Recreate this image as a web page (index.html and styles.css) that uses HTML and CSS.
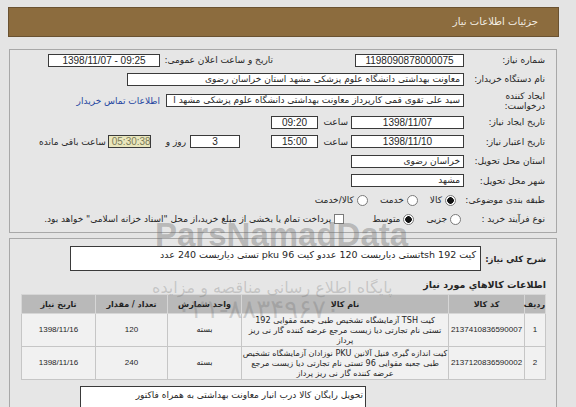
FILE: index.html
```html
<!DOCTYPE html>
<html lang="fa">
<head>
<meta charset="utf-8">
<title>جزئیات اطلاعات نیاز</title>
<link rel="stylesheet" href="styles.css">
</head>
<body>
<div class="wrap">
  <div class="hdr">جزئیات اطلاعات نیاز</div>

  <div class="panel p1">
    <div class="row r1">
      <span class="lbl">شماره نیاز:</span>
      <span class="box num need-no">1198090878000075</span>
      <span class="lbl2">تاریخ و ساعت اعلان عمومی:</span>
      <span class="box num pubdate">1398/11/07 - 09:25</span>
    </div>
    <div class="row r2">
      <span class="lbl">نام دستگاه خریدار:</span>
      <span class="box txt buyer">معاونت بهداشتی دانشگاه علوم پزشکی مشهد استان خراسان رضوی</span>
    </div>
    <div class="row r3">
      <span class="lbl two">ایجاد کننده<br>درخواست:</span>
      <span class="box txt creator">سید علی تقوی قمی کارپرداز معاونت بهداشتی دانشگاه علوم پزشکی مشهد ا</span>
      <a class="contact" href="#">اطلاعات تماس خریدار</a>
    </div>
    <div class="row r4">
      <span class="lbl">تاریخ ایجاد نیاز:</span>
      <span class="box num date">1398/11/07</span>
      <span class="at">ساعت</span>
      <span class="box num time">09:20</span>
    </div>
    <div class="row r5">
      <span class="lbl">تاریخ اعتبار نیاز:</span>
      <span class="box num date">1398/11/10</span>
      <span class="at">ساعت</span>
      <span class="box num time">15:00</span>
      <span class="box num days">3</span>
      <span class="dayand">روز و</span>
      <span class="box num remain">05:30:38</span>
      <span class="remain-lbl">ساعت باقی مانده</span>
    </div>
    <div class="row r6">
      <span class="lbl">استان محل تحویل:</span>
      <span class="box txt place">خراسان رضوی</span>
    </div>
    <div class="row r7">
      <span class="lbl">شهر محل تحویل:</span>
      <span class="box txt place">مشهد</span>
    </div>
    <div class="row r8">
      <span class="lbl">طبقه بندی موضوعی:</span>
      <span class="opt first"><span class="radio on"></span>کالا</span>
      <span class="opt"><span class="radio"></span>خدمت</span>
      <span class="opt"><span class="radio"></span>کالا/خدمت</span>
    </div>
    <div class="row r9">
      <span class="lbl short">نوع فرآیند خرید :</span>
      <span class="opt"><span class="radio"></span>جزیی</span>
      <span class="opt"><span class="radio on"></span>متوسط</span>
      <span class="opt chk-opt"><span class="check"></span>پرداخت تمام یا بخشی از مبلغ خرید،از محل "اسناد خزانه اسلامی" خواهد بود.</span>
    </div>
  </div>

  <div class="panel p2">
    <div class="desc-row">
      <span class="desc-lbl">شرح کلي نیاز:</span>
      <div class="desc-box">کیت 192 tshتستی دیاریست 120 عددو کیت pku 96 تستی دیاریست 240 عدد</div>
    </div>
    <div class="title">اطلاعات کالاهاي مورد نیاز</div>
    <table class="items">
      <colgroup>
        <col class="c-no"><col class="c-code"><col class="c-name"><col class="c-unit"><col class="c-qty"><col class="c-date">
      </colgroup>
      <thead>
        <tr><th>ردیف</th><th>کد کالا</th><th>نام کالا</th><th>واحد شمارش</th><th>تعداد / مقدار</th><th>تاریخ نیاز</th></tr>
      </thead>
      <tbody>
        <tr>
          <td class="n">1</td>
          <td class="n">2137410836590007</td>
          <td class="name">کیت TSH آزمایشگاه تشخیص طبی جعبه مقوایی 192<br>تستی نام تجارتی دیا زیست مرجع عرضه کننده گار نی ریز<br>پرداز</td>
          <td>بسته</td>
          <td class="n">120</td>
          <td class="n">1398/11/16</td>
        </tr>
        <tr>
          <td class="n">2</td>
          <td class="n">2137120836590002</td>
          <td class="name">کیت اندازه گیری فنیل آلانین PKU نوزادان آزمایشگاه تشخیص<br>طبی جعبه مقوایی 96 تستی نام تجارتی دیا زیست مرجع<br>عرضه کننده گار نی ریز پرداز</td>
          <td>بسته</td>
          <td class="n">240</td>
          <td class="n">1398/11/16</td>
        </tr>
      </tbody>
    </table>
    <div class="note">تحویل رایگان کالا درب انبار معاونت بهداشتی به همراه فاکتور</div>
  </div>
</div>

<div class="wm" aria-hidden="true">
  <span class="wm-brand">ParsNamadData</span>
  <span class="wm-site">پایگاه اطلاع رسانی مناقصه و مزایده</span>
  <span class="wm-phone">۰۲۱-۸۸۳۴۹۶۷۰</span>
</div>
</body>
</html>
```

FILE: styles.css
```css
html, body {
  margin: 0;
  padding: 0;
}
body {
  position: relative;
  background: #e4e4e4;
  font-family: "DejaVu Sans", sans-serif;
  font-size: 9px;
  color: #262626;
  overflow: hidden;
}
.wrap {
  width: 551px;
  margin: 7px 0 0 8px;
  direction: rtl;
}
.hdr {
  height: 28px;
  line-height: 28px;
  background: #8c6c3e;
  border: 1px solid #6a5231;
  color: #f3eee4;
  padding-right: 20px;
  font-size: 10px;
}
.panel {
  border: 1px solid #a8a8a8;
  background: #e6e6e6;
  margin: 0 2px 0 1px;
}
.p1 {
  margin-top: 12px;
  padding: 1px 11px 4px 0;
}
.row {
  display: flex;
  align-items: center;
  height: 19px;
  white-space: nowrap;
}
.r1 { height: 18px; }
.r2 { height: 20px; }
.r3 { height: 23px; }
.r4 { height: 20px; }
.r5 { height: 19px; }
.r6 { height: 20px; }
.r7 { height: 19px; }
.r8 { height: 20px; }
.r9 { height: 18px; }

.lbl {
  width: 81px;
  flex: none;
}
.lbl.two {
  line-height: 10px;
  white-space: normal;
}
.lbl.short {
  width: 72px;
}
.box {
  flex: none;
  box-sizing: border-box;
  height: 13px;
  line-height: 11px;
  border: 1px solid #3a3a3a;
  background: #fff;
  padding: 0 3px;
  overflow: hidden;
  white-space: nowrap;
}
.num {
  direction: ltr;
  text-align: center;
  font-family: "Liberation Sans", "DejaVu Sans", sans-serif;
  font-size: 10px;
}
.txt {
  text-align: right;
}
.need-no { width: 109px; }
.lbl2 {
  width: 107px;
  margin-right: 82px;
  flex: none;
}
.pubdate { width: 112px; margin-right: 6px; }
.buyer { width: 337px; }
.creator { width: 298px; }
.contact {
  margin-right: 6px;
  color: #2445a0;
  text-decoration: none;
}
.date { width: 113px; }
.at {
  width: 30px;
  padding-right: 3px;
  flex: none;
}
.time { width: 47px; }
.days { width: 50px; margin-right: 31px; }
.dayand { margin-right: 4px; }
.remain {
  width: 43px;
  margin-right: 15px;
  background: #e9e6bc;
  color: #7b7a58;
}
.remain-lbl { margin-right: 2px; }
.place { width: 113px; }

.opt {
  display: flex;
  align-items: center;
  margin-right: 12px;
}
.opt.first { margin-right: 8px; }
.radio {
  width: 11px;
  height: 11px;
  box-sizing: border-box;
  border-radius: 50%;
  border: 1px solid #7a7a7a;
  background: #fff;
  margin-left: 3px;
  flex: none;
}
.radio.on {
  background: radial-gradient(circle, #111 0 3px, #fff 3.6px);
}
.check {
  width: 10px;
  height: 10px;
  box-sizing: border-box;
  border: 1px solid #7a7a7a;
  background: #fff;
  margin-left: 3px;
  flex: none;
}
.chk-opt { margin-right: 28px; }

.p2 {
  margin-top: 5px;
  padding: 7px 10px 0 0;
  height: 200px;
}
.desc-row {
  display: flex;
  align-items: center;
}
.desc-lbl {
  width: 61px;
  flex: none;
  font-weight: bold;
  font-size: 8.5px;
  white-space: nowrap;
}
.desc-box {
  width: 411px;
  height: 25px;
  box-sizing: border-box;
  margin-right: 4px;
  border: 1px solid #3a3a3a;
  background: #fff;
  padding: 2px 4px;
  font-size: 9.5px;
  white-space: nowrap;
  overflow: hidden;
}
.title {
  margin-top: 7px;
  height: 14px;
  line-height: 14px;
  font-weight: bold;
  font-size: 9.5px;
}
.items {
  margin-top: 2px;
  width: 524px;
  border-collapse: collapse;
  table-layout: fixed;
  background: #d0d0d0;
  border: 1px solid #c2c2c2;
}
.c-no { width: 21px; }
.c-code { width: 76px; }
.c-name { width: 207px; }
.c-unit { width: 74px; }
.c-qty { width: 72px; }
.c-date { width: 74px; }
.items th {
  height: 18px;
  padding: 0;
  background: #b9b9b9;
  border: 1px solid #d6d6d6;
  font-size: 8px;
  font-weight: bold;
  color: #222;
}
.items td {
  height: 32px;
  padding: 0;
  background: #f1f1f1;
  border: 1px solid #c6c6c6;
  text-align: center;
  font-size: 8px;
  line-height: 10px;
  white-space: nowrap;
  overflow: hidden;
}
.items td.n {
  font-family: "Liberation Sans", "DejaVu Sans", sans-serif;
  font-size: 8px;
}
.items td.name {
  font-size: 8.1px;
}
.note {
  margin: 6px 180px 0 0;
  width: 286px;
  height: 40px;
  box-sizing: border-box;
  border: 1px solid #3a3a3a;
  background: #fff;
  padding: 3px 2px;
  white-space: nowrap;
}

/* faint watermark laid over the page */
.wm {
  position: absolute;
  left: 0;
  top: 0;
  width: 576px;
  height: 407px;
  pointer-events: none;
  color: rgba(110, 110, 110, 0.28);
}
.wm span {
  position: absolute;
  white-space: nowrap;
  line-height: 1;
}
.wm-brand {
  left: 155px;
  top: 218px;
  font-family: "Liberation Sans", sans-serif;
  font-weight: bold;
  font-size: 33px;
  color: rgba(110, 110, 110, 0.4);
}
.wm-site {
  left: 152px;
  top: 280px;
  direction: rtl;
  font-size: 16px;
}
.wm-phone {
  left: 177px;
  top: 296px;
  direction: ltr;
  font-size: 26px;
  letter-spacing: 2px;
}
```
